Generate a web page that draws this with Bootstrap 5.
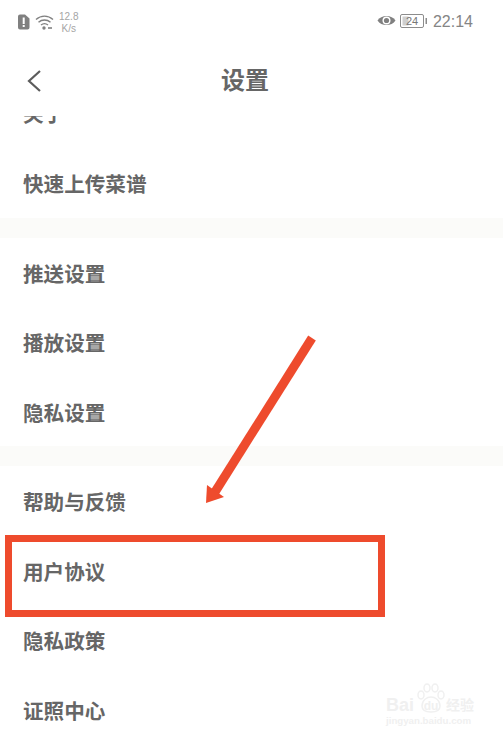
<!DOCTYPE html>
<html lang="zh">
<head>
    <title>设置</title>
    <meta charset="UTF-8">
    <link href="https://cdn.jsdelivr.net/npm/bootstrap@5.3.2/dist/css/bootstrap.min.css" rel="stylesheet">
    <style>
        body {
            font-family: "Noto Sans CJK SC", "Noto Sans", sans-serif;
            background: #fff;
            color: #5c5c5c;
        }
        .phone-screen {
            position: relative;
            width: 503px;
            height: 738px;
            overflow: hidden;
        }
        .status-row {
            height: 46px;
            padding: 10px 30px 0 17px;
        }
        .speed-text {
            font: 10px/12px "Liberation Sans", sans-serif;
            color: #a5a5a5;
            text-align: center;
            padding-top: 1px;
        }
        .clock-text {
            font: 16px/20px "Liberation Sans", sans-serif;
            color: #858585;
            margin: 2px 0 0 5px;
        }
        .title-row {
            width: 490px;
            height: 70px;
            padding-left: 27px;
        }
        .page-title {
            font-size: 24px;
            font-weight: 700;
            line-height: 1;
            margin: -2px 0 0;
            color: #666;
        }
        .setting-item {
            height: 69.5px;
            padding: 2px 0 0 23px;
            font-size: 20.6px;
            font-weight: 700;
            color: #666;
        }
        .first-cut {
            height: 32px;
            padding-top: 0;
            overflow: hidden;
        }
        .first-cut span {
            display: block;
            line-height: 21px;
            margin-top: -13px;
        }
        .group-gap {
            height: 20px;
            background: #fbfbf9;
        }
        .mark-box {
            position: absolute;
            left: 5px;
            top: 535px;
            width: 380px;
            height: 82px;
            border: 7px solid #ee4b2d;
        }
        .mark-arrow {
            position: absolute;
            left: 195px;
            top: 330px;
        }
        .wm-block {
            position: absolute;
            left: 386px;
            top: 682px;
            width: 90px;
            color: #f0f0f0;
        }
        .wm-logo {
            font: 700 18px/18px "Liberation Sans", "Noto Sans CJK SC", sans-serif;
            height: 32px;
        }
        .wm-cn {
            font-size: 14px;
            line-height: 18px;
        }
        .wm-url {
            font: 700 9.7px/12px "Liberation Sans", sans-serif;
            white-space: nowrap;
            margin-top: 1px;
        }
    </style>
</head>
<body>
<div class="phone-screen">
    <div class="status-row d-flex align-items-start justify-content-between">
        <div class="d-flex align-items-start gap-1">
            <svg class="mt-1" width="14" height="16" viewBox="0 0 14 16"><path d="M3 0.500h5l4.500 4v9a2 2 0 0 1-2 2H3a2 2 0 0 1-2-2v-11a2 2 0 0 1 2-2z" fill="#808080"/><rect x="5.700" y="3.500" width="2" height="6.500" fill="#fff"/><rect x="5.700" y="11" width="2" height="2" fill="#fff"/></svg>
            <svg class="mt-1" width="20" height="16" viewBox="0 0 20 16" fill="none" stroke="#808080" stroke-width="1.400"><path d="M1 5.500c5-4.500 12-4.500 17 0"/><path d="M3.500 8.300c3.500-3 8.500-3 12 0"/><path d="M6 11c2-1.600 5-1.600 7 0"/><circle cx="9" cy="14" r="1" fill="#808080"/><path d="M13 14h4" stroke-width="1.600"/></svg>
            <div class="speed-text">12.8<br>K/s</div>
        </div>
        <div class="d-flex align-items-start">
            <svg class="mt-1 me-1" width="19" height="13" viewBox="0 0 19 13"><path d="M0.500 6.500C4 0.500 15 0.500 18.500 6.500 15 12.500 4 12.500 0.500 6.500z" fill="#808080"/><circle cx="9.500" cy="6.500" r="4" fill="#fff"/><circle cx="9.500" cy="6.500" r="2.600" fill="#808080"/></svg>
            <svg class="mt-1" width="28" height="14" viewBox="0 0 28 14"><rect x="0.500" y="0.500" width="23" height="13" rx="1.500" fill="none" stroke="#8c8c8c"/><rect x="2.500" y="2.500" width="6" height="9" fill="#cfcfcf"/><rect x="25.500" y="4" width="1.500" height="6" fill="#8c8c8c"/><text x="12" y="11" font-family="Liberation Sans" font-size="11" text-anchor="middle" fill="#777">24</text></svg>
            <span class="clock-text">22:14</span>
        </div>
    </div>
    <div class="title-row position-relative d-flex align-items-center">
        <svg width="16" height="24" viewBox="0 0 16 24" fill="none" stroke="#5c5c5c" stroke-width="2.200"><path d="M13 2 2 12l11 10"/></svg>
        <h1 class="page-title position-absolute top-50 start-50 translate-middle">设置</h1>
    </div>
    <div>
        <div class="setting-item first-cut"><span>关于</span></div>
        <div class="setting-item d-flex align-items-center">快速上传菜谱</div>
        <div class="group-gap"></div>
        <div class="setting-item d-flex align-items-center">推送设置</div>
        <div class="setting-item d-flex align-items-center">播放设置</div>
        <div class="setting-item d-flex align-items-center">隐私设置</div>
        <div class="group-gap"></div>
        <div class="setting-item d-flex align-items-center">帮助与反馈</div>
        <div class="setting-item d-flex align-items-center">用户协议</div>
        <div class="setting-item d-flex align-items-center">隐私政策</div>
        <div class="setting-item d-flex align-items-center">证照中心</div>
    </div>
    <svg class="mark-arrow" width="125" height="180" viewBox="0 0 125 180"><path d="M117 8 20 162" stroke="#ee4b2d" stroke-width="9" fill="none"/><path d="M11 173 12 155 29 167z" fill="#ee4b2d"/></svg>
    <div class="mark-box"></div>
    <div class="wm-block">
        <div class="wm-logo d-flex align-items-end">
            <span>Bai</span>
            <svg width="32" height="32" viewBox="0 0 32 32" fill="none" stroke="#f0f0f0" stroke-width="1.500"><ellipse cx="7" cy="13" rx="3" ry="4"/><ellipse cx="13" cy="6" rx="3" ry="4"/><ellipse cx="21" cy="6" rx="3" ry="4"/><ellipse cx="27" cy="13" rx="3" ry="4"/><path d="M8 24c0-6 5-9 9-9s9 3 9 9c0 5-4 6-9 6s-9-1-9-6z"/><text x="17" y="28" font-family="Liberation Sans" font-size="12" font-weight="700" text-anchor="middle" fill="#f0f0f0" stroke="none">du</text></svg>
            <span class="wm-cn">经验</span>
        </div>
        <div class="wm-url">jingyan.baidu.com</div>
    </div>
</div>
<script src="https://cdn.jsdelivr.net/npm/bootstrap@5.3.2/dist/js/bootstrap.bundle.min.js"></script>
</body>
</html>
